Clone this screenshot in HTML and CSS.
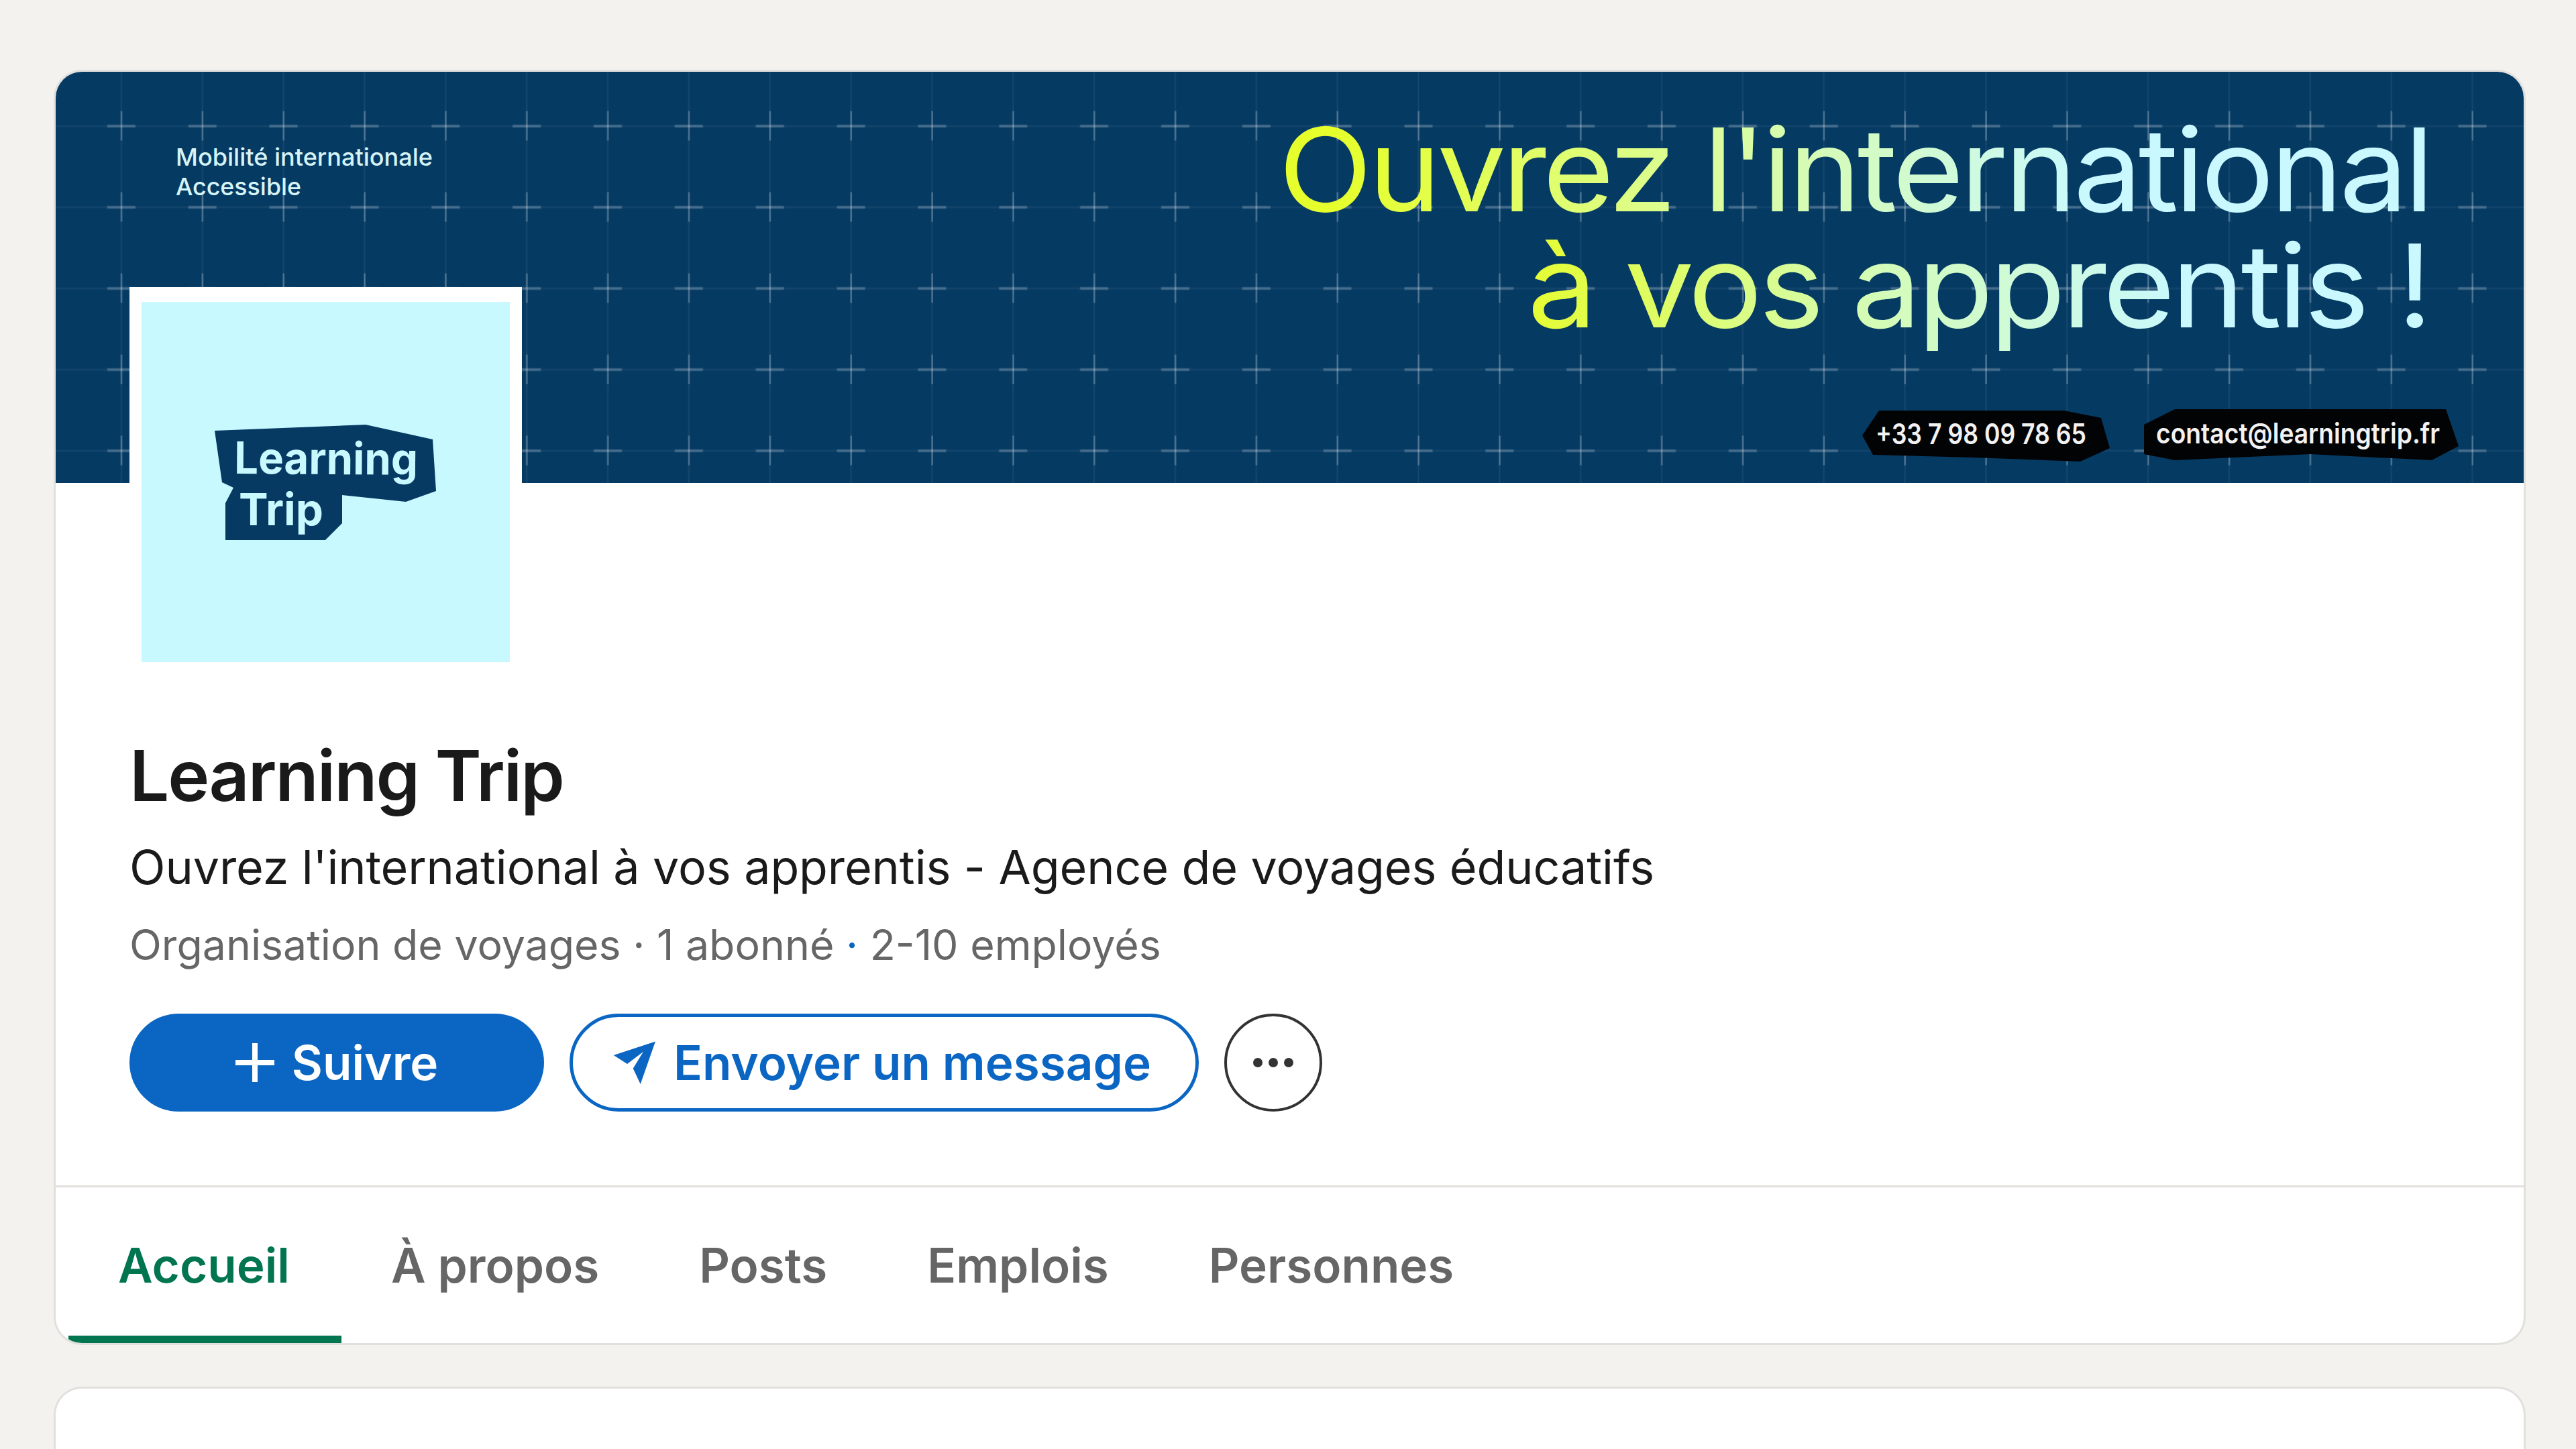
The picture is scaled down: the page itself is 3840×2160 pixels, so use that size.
FILE: index.html
```html
<!DOCTYPE html>
<html lang="fr">
<head>
<meta charset="utf-8">
<title>Learning Trip</title>
<link rel="stylesheet" href="styles.css">
</head>
<body>
<main class="page">
  <section class="card">
    <svg class="banner" viewBox="83 107 3679 613" width="3679" height="613" xmlns="http://www.w3.org/2000/svg">
      <defs>
        <pattern id="grid" patternUnits="userSpaceOnUse" x="120.5" y="126.5" width="120.85" height="121">
          <rect class="grid-v" x="59.4" y="0" width="2" height="121"/>
          <rect class="grid-h" x="0" y="60" width="120.85" height="3"/>
          <rect class="plus-v" x="59.4" y="39" width="2.4" height="44"/>
          <rect class="plus-h" x="39.4" y="59.5" width="42" height="4"/>
        </pattern>
        <linearGradient id="line-one" gradientUnits="userSpaceOnUse" x1="1990" y1="0" x2="3120" y2="0">
          <stop offset="0" stop-color="#e6ff2c"/>
          <stop offset="0.45" stop-color="#dcfd92"/>
          <stop offset="1" stop-color="#c9f9ff"/>
        </linearGradient>
        <linearGradient id="line-two" gradientUnits="userSpaceOnUse" x1="2300" y1="0" x2="3260" y2="0">
          <stop offset="0" stop-color="#e4fd38"/>
          <stop offset="0.5" stop-color="#d4fcb4"/>
          <stop offset="1" stop-color="#c9f9ff"/>
        </linearGradient>
      </defs>
      <rect class="banner-bg" x="83" y="107" width="3679" height="613"/>
      <rect x="83" y="107" width="3679" height="613" fill="url(#grid)"/>
      <text class="banner-small" x="262" y="247" textLength="383" lengthAdjust="spacingAndGlyphs">Mobilité internationale</text>
      <text class="banner-small" x="262" y="291" textLength="187" lengthAdjust="spacingAndGlyphs">Accessible</text>
      <text class="headline" x="1906" y="315" textLength="1717" lengthAdjust="spacingAndGlyphs" fill="url(#line-one)">Ouvrez l'international</text>
      <text class="headline" x="2277" y="488" textLength="1344" lengthAdjust="spacingAndGlyphs" fill="url(#line-two)">à vos apprentis !</text>
      <polygon class="tag" points="2801,612 3077,612 3132,623 3145,668 3101,688 2942,682 2792,678 2776,649"/>
      <polygon class="tag" points="3242,610 3646,610 3665,665 3625,686 3444,677 3242,686 3196,677 3196,633"/>
      <text class="tag-text" x="2796" y="662" textLength="314" lengthAdjust="spacingAndGlyphs">+33 7 98 09 78 65</text>
      <text class="tag-text" x="3214" y="661" textLength="423" lengthAdjust="spacingAndGlyphs">contact@learningtrip.fr</text>
    </svg>
    <div class="profile">
      <div class="avatar">
        <svg class="logo" viewBox="211 450 549 537" width="549" height="537" xmlns="http://www.w3.org/2000/svg">
          <rect class="logo-bg" x="211" y="450" width="549" height="537"/>
          <polygon class="logo-shape" points="320,642 545,633 645,655 650,732 605,748 510,738 510,780 485,805 336,805 336,750 348,727 331,719"/>
          <text class="logo-text" x="349" y="706" textLength="274" lengthAdjust="spacingAndGlyphs" transform="rotate(0.4 349 706)">Learning</text>
          <text class="logo-text" x="356" y="783" textLength="126" lengthAdjust="spacingAndGlyphs">Trip</text>
        </svg>
      </div>
      <h1 class="name">Learning Trip</h1>
      <p class="tagline">Ouvrez l'international à vos apprentis - Agence de voyages éducatifs</p>
      <p class="meta">Organisation de voyages · 1 abonné <span class="meta-dot">·</span> 2-10 employés</p>
      <div class="actions">
        <button class="btn btn-primary" type="button">
          <svg class="plus-icon" viewBox="0 0 58 58" width="58" height="58" xmlns="http://www.w3.org/2000/svg">
            <path d="M25 0h8v25h25v8H33v25h-8V33H0v-8h25z"/>
          </svg>
          Suivre
        </button>
        <button class="btn btn-outline" type="button">
          <svg class="send-icon" viewBox="912 1556 64 64" width="64" height="64" xmlns="http://www.w3.org/2000/svg">
            <polygon points="912.7,1577 975,1556.5 952.7,1620 941.7,1596.7 957,1571.7 933,1590"/>
          </svg>
          Envoyer un message
        </button>
        <button class="btn-more" type="button" aria-label="Plus">
          <svg viewBox="0 0 62 14" width="62" height="14" xmlns="http://www.w3.org/2000/svg">
            <circle cx="8" cy="7" r="7"/><circle cx="31" cy="7" r="7"/><circle cx="54" cy="7" r="7"/>
          </svg>
        </button>
      </div>
    </div>
    <nav class="tabs">
      <a class="tab tab-active">Accueil</a>
      <a class="tab">À propos</a>
      <a class="tab">Posts</a>
      <a class="tab">Emplois</a>
      <a class="tab">Personnes</a>
    </nav>
  </section>
  <section class="card card-next"></section>
</main>
</body>
</html>
```
FILE: styles.css
```css
* { box-sizing: border-box; }
html, body { margin: 0; height: 2160px; overflow: hidden; background: #f4f2ee; }
body { font-family: Inter, "Liberation Sans", sans-serif; color: #1a1a1a; }
.page { height: 2160px; padding: 104px 75px 0 80px; display: flex; flex-direction: column; gap: 62px; }
.card { background: #fff; border: 3px solid #e2e0dc; border-radius: 42px; overflow: hidden; flex: none; }
.card-next { flex: 1; min-height: 0; border-bottom: 0; border-radius: 42px 42px 0 0; }
.banner { display: block; }
.banner-bg { fill: #053a63; }
.grid-v { fill: #ffffff; opacity: .07; }
.grid-h { fill: #ffffff; opacity: .05; }
.plus-v { fill: #ffffff; opacity: .26; }
.plus-h { fill: #ffffff; opacity: .22; }
.banner-small { font-family: Inter, sans-serif; font-size: 36px; font-weight: 500; fill: #d6f4f7; }
.headline { font-family: Inter, sans-serif; font-size: 172px; font-weight: 400; letter-spacing: -5px; }
.tag { fill: #020305; }
.tag-text { font-family: Inter, sans-serif; font-size: 42px; font-weight: 600; fill: #f2f2f2; }
.profile { padding: 0 0 110px 110px; border-bottom: 3px solid #e2e0dc; display: flex; flex-direction: column; align-items: flex-start; }
.avatar { margin-top: -292px; width: 585px; height: 559px; padding: 22px 18px 0; background: #fff; position: relative; }
.logo { display: block; }
.logo-bg { fill: #c8f9ff; }
.logo-shape { fill: #063a63; }
.logo-text { font-family: Inter, sans-serif; font-size: 66px; font-weight: 700; fill: #c8f9ff; }
.name { margin: 104px 0 0; font-size: 105px; line-height: 130px; font-weight: 600; letter-spacing: -2px; color: #1a1a1a; }
.tagline { margin: 27px 0 0; font-size: 70px; line-height: 90px; font-weight: 400; letter-spacing: -.12px; color: #1a1a1a; }
.meta { margin: 25px 0 0; font-size: 62.6px; line-height: 90px; color: #666; }
.meta-dot { color: #0a66c2; }
.actions { margin-top: 58px; display: flex; gap: 38px; align-items: center; }
.btn { height: 146px; border-radius: 73px; font-family: inherit; font-size: 71px; font-weight: 600; display: flex; align-items: center; justify-content: center; }
.btn-primary { width: 618px; background: #0a66c2; color: #fff; border: 0; gap: 26px; }
.plus-icon { fill: #fff; }
.btn-outline { width: 938px; background: #fff; color: #0a66c2; border: 5px solid #0a66c2; gap: 26px; padding: 0 6px 0 0; }
.send-icon { fill: #0a66c2; }
.btn-more { width: 146px; height: 146px; border-radius: 50%; border: 4px solid #333; background: #fff; padding: 0; display: flex; align-items: center; justify-content: center; }
.btn-more svg { fill: #333; }
.tabs { display: flex; height: 232px; padding-left: 19px; }
.tab { padding: 0 75px 0 74px; display: flex; align-items: center; font-size: 71px; font-weight: 600; color: #666; }
.tab-active { color: #01754f; border-bottom: 11px solid #01754f; padding-top: 11px; padding-right: 77px; }
```
